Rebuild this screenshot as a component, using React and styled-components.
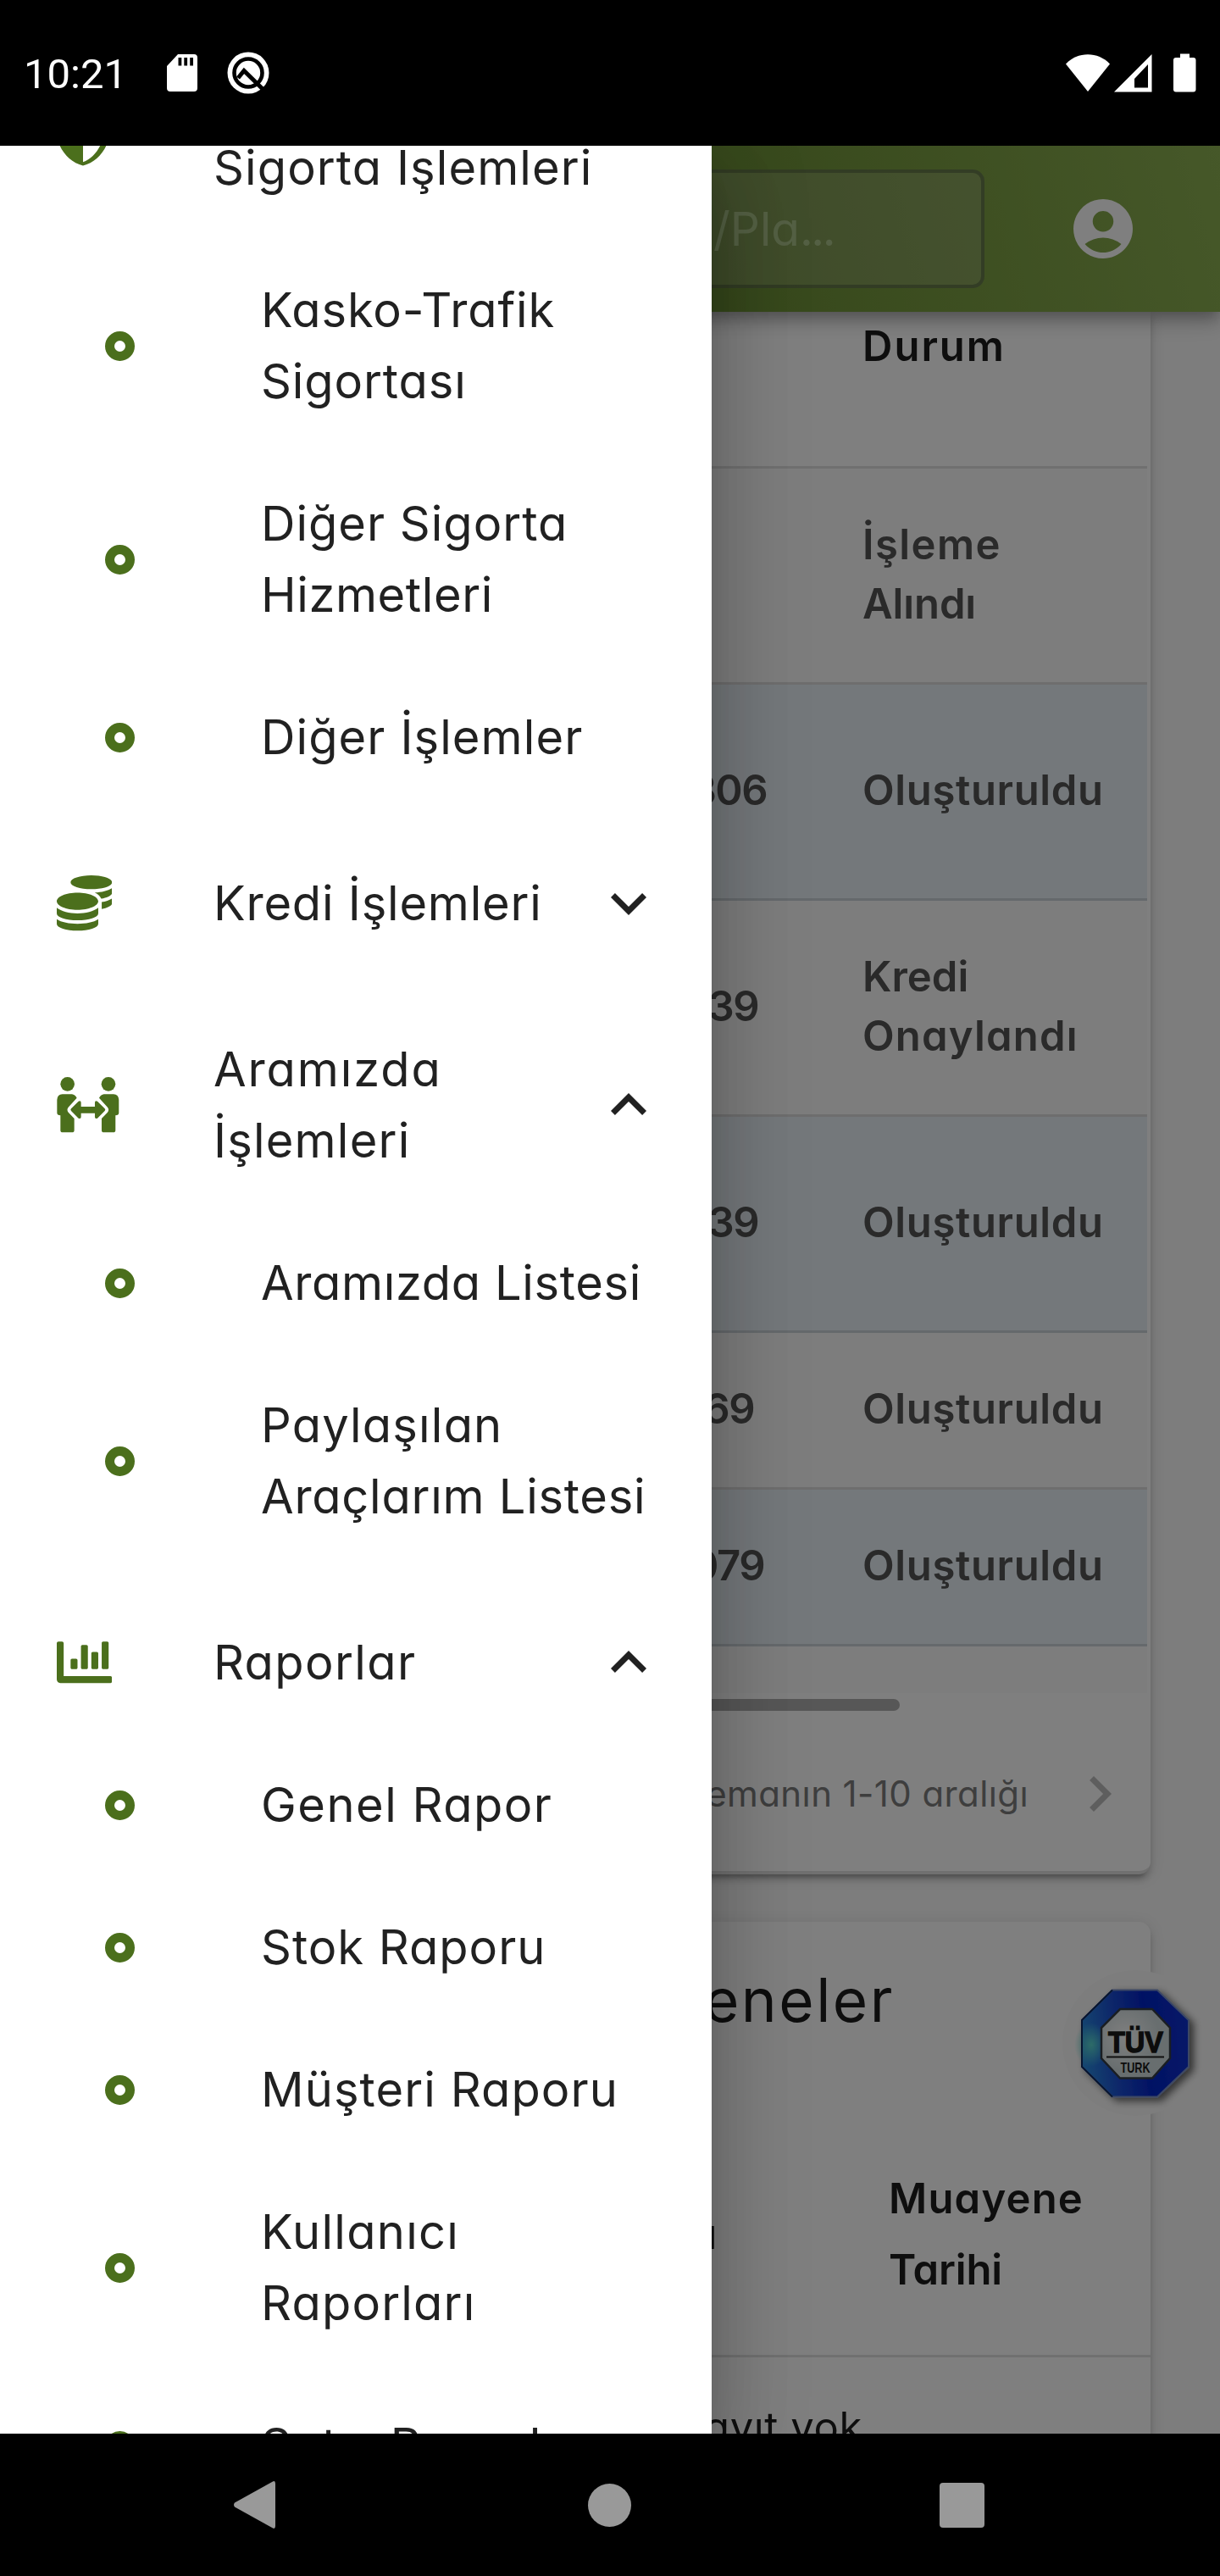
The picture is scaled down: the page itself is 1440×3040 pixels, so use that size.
import styled, { createGlobalStyle } from "styled-components";
import { FaChartBar, FaCoins } from "react-icons/fa";
import {
    MdAccountCircle,
    MdChevronRight,
    MdExpandLess,
    MdExpandMore,
} from "react-icons/md";

const ShieldHalf = () => (
    <svg viewBox="0 0 24 24" width="84" height="84" fill="currentColor">
        <path d="M12 1L3 5v6c0 5.55 3.84 10.74 9 12 5.16-1.26 9-6.45 9-12V5l-9-4m0 2.18l7 3.12v4.7c0 4.83-3.13 9.42-7 10.79V3.18z" />
    </svg>
);

const person =
    "M70 111H104Q114 112 121 124L91 157Q84 166 91 175L112 197V238Q112 246 104 246H71Q63 246 63 238V186Q51 186 51 177V131Q52 112 70 111z";

const PeopleArrows = () => (
    <svg viewBox="50 50 221 196" fill="currentColor">
        <circle cx="88" cy="75" r="25" />
        <path d={person} />
        <g transform="matrix(-1 0 0 1 321 0)">
            <circle cx="88" cy="75" r="25" />
            <path d={person} />
        </g>
        <path d="M101 162L127 136Q136 132 136 141V155H185V141Q185 132 194 136L220 162Q224 166 220 170L194 196Q185 200 185 191V178H136V191Q136 200 127 196L101 170Q97 166 101 162z" />
    </svg>
);

// every line is [text, letter spacing]
const menu = [
    {
        icon: <ShieldHalf />,
        lines: [["Sigorta İşlemleri", 1.1]],
        items: [
            [["Kasko-Trafik", 0.9], ["Sigortası", 0.9]],
            [["Diğer Sigorta", 1], ["Hizmetleri", 0.6]],
            [["Diğer İşlemler", 1.1]],
        ],
    },
    {
        icon: <FaCoins />,
        small: true,
        chevron: <MdExpandMore />,
        lines: [["Kredi İşlemleri", 0.8]],
        items: [],
    },
    {
        icon: <PeopleArrows />,
        small: true,
        chevron: <MdExpandLess />,
        lines: [["Aramızda", 1.9], ["İşlemleri", 1.2]],
        items: [
            [["Aramızda Listesi", 0.65]],
            [["Paylaşılan", 1.2], ["Araçlarım Listesi", 0.75]],
        ],
    },
    {
        icon: <FaChartBar />,
        small: true,
        chevron: <MdExpandLess />,
        lines: [["Raporlar", 1.4]],
        items: [
            [["Genel Rapor", 1.5]],
            [["Stok Raporu", 1]],
            [["Müşteri Raporu", 1.1]],
            [["Kullanıcı", 1.3], ["Raporları", 1.2]],
            [["Satış Raporları", 0.9]],
        ],
    },
];

const rows = [
    { status: [["İşleme", 1.4], ["Alındı", -0.1]] },
    { no: "306", end: 113, striped: true, status: [["Oluşturuldu", 0.65]] },
    { no: "139", end: 123, status: [["Kredi", 0], ["Onaylandı", 1.2]] },
    { no: "139", end: 123, striped: true, status: [["Oluşturuldu", 0.65]] },
    { no: "169", end: 128, short: true, status: [["Oluşturuldu", 0.65]] },
    { no: "079", end: 116, short: true, striped: true, status: [["Oluşturuldu", 0.65]] },
];

const Lines = ({ lines }) =>
    lines.map(([text, track]) => (
        <Line key={text} $track={track}>
            {text}
        </Line>
    ));

const StatusBar = () => (
    <TopBar>
        <Clock>10:21</Clock>
        <svg width="38" height="46" viewBox="0 0 38 46">
            <path
                fill="#fff"
                fillRule="evenodd"
                d="M14 1H33a4 4 0 0 1 4 4V41a4 4 0 0 1-4 4H5a4 4 0 0 1-4-4V15zM14.500 5v9.500h3.800V5zM21.300 5v9.500h3.800V5zM28.200 5v9.500h3.800V5z"
            />
        </svg>
        <AndroidQ width="52" height="52" viewBox="0 0 52 52">
            <circle cx="26" cy="26" r="24.500" fill="#fff" />
            <circle cx="26" cy="26" r="16.500" fill="#fff" stroke="#000" strokeWidth="4.600" />
            <path d="M14 32l7-8.500L44 46" fill="none" stroke="#000" strokeWidth="5" />
        </AndroidQ>
        <Signals width="156" height="46" viewBox="0 0 156 46">
            <path fill="#fff" d="M1 12.500C15-2.500 39-2.500 53 12.500L27 45z" />
            <path
                fill="#fff"
                fillRule="evenodd"
                d="M102.500 1V45.500H58zM98 13L82 30V40.500H98z"
            />
            <path
                fill="#fff"
                d="M136 .500h11V5h4.500a3 3 0 0 1 3 3V42.500a3 3 0 0 1-3 3h-20.500a3 3 0 0 1-3-3V8a3 3 0 0 1 3-3h5z"
            />
        </Signals>
    </TopBar>
);

const NavBar = () => (
    <BottomBar>
        <svg width="56" height="60" viewBox="0 0 56 60">
            <path fill="#999" d="M4 27.500L49 2.500Q52 1 52 5V55Q52 59 49 57.500L4 32.500Q2 30 4 27.500z" />
        </svg>
        <HomeKey />
        <RecentKey />
    </BottomBar>
);

const TuvBadge = () => (
    <Badge>
        <svg width="172" height="172" viewBox="0 0 172 172">
            <defs>
                <linearGradient id="ring" x1="0" x2="1" y1="0.5" y2="0.4">
                    <stop offset="0" stopColor="#2a8ce0" />
                    <stop offset="0.3" stopColor="#1c50d4" />
                    <stop offset="0.6" stopColor="#0424c8" />
                    <stop offset="1" stopColor="#0a30d0" />
                </linearGradient>
                <radialGradient id="teal">
                    <stop offset="0" stopColor="#5ad8d0" />
                    <stop offset="1" stopColor="#5ad8d0" stopOpacity="0" />
                </radialGradient>
                <radialGradient id="plate" cx="0.35" cy="0.4">
                    <stop offset="0" stopColor="#fff" />
                    <stop offset="1" stopColor="#d0dcde" />
                </radialGradient>
                <filter id="drop" x="-20%" y="-20%" width="150%" height="150%">
                    <feDropShadow dx="5" dy="4" stdDeviation="5" floodOpacity="0.6" />
                </filter>
            </defs>
            <g filter="url(#drop)">
                <path
                    d="M59 23.500H112L149 59V114L112 149.500H59L23 114V59z"
                    fill="url(#ring)"
                    stroke="#7a90c8"
                    strokeWidth="2"
                />
            </g>
            <ellipse cx="34" cy="88" rx="20" ry="26" fill="url(#teal)" />
            <path d="M59 149.500L23 114V59L59 23.500" fill="none" stroke="#0c2860" strokeWidth="2" />
            <path
                d="M68 46H106L127 68V104L106 127.500H68L46 104V68z"
                fill="url(#plate)"
                stroke="#343c44"
                strokeWidth="2.500"
            />
            <TuvText x="86.500" y="97" $size={35} $stroke={1.4} textLength="65" lengthAdjust="spacingAndGlyphs">
                TÜV
            </TuvText>
            <rect x="52" y="101.500" width="68" height="2" fill="#202020" />
            <TuvText x="86" y="120.500" $size={16.5} $stroke={0} textLength="35" lengthAdjust="spacingAndGlyphs">
                TURK
            </TuvText>
        </svg>
    </Badge>
);

const App = () => {
    return (
        <Screen>
            <GlobalStyle />
            <StatusBar />
            <Viewport>
                <AppBar>
                    <Search>
                        /Pla<Dots>...</Dots>
                    </Search>
                    <MdAccountCircle size={84} color="#fff" />
                </AppBar>
                <TableCard>
                    <HeadRow>
                        <StatusCell>
                            <Lines lines={[["Durum", 2]]} />
                        </StatusCell>
                    </HeadRow>
                    {rows.map((row, i) => (
                        <Row key={i} $short={row.short} $striped={row.striped}>
                            <NumberCell $end={row.end}>{row.no}</NumberCell>
                            <StatusCell>
                                <Lines lines={row.status} />
                            </StatusCell>
                        </Row>
                    ))}
                    <Filler />
                    <ScrollThumb />
                    <Pager>
                        <PagerText>elemanın 1-10 aralığı</PagerText>
                        <MdChevronRight size={84} color="#bcbcbc" />
                    </Pager>
                </TableCard>
                <InspectionCard>
                    <CardTitle>Muayeneler</CardTitle>
                    <InspectionHead>
                        <PlateHead>Plakası</PlateHead>
                        <DateHead>
                            <Lines lines={[["Muayene", 1.2], ["Tarihi", -0.1]]} />
                        </DateHead>
                    </InspectionHead>
                    <EmptyRow>Kayıt yok</EmptyRow>
                </InspectionCard>
                <TuvBadge />
                <Scrim />
                <Drawer>
                    {menu.map((group, i) => (
                        <Group key={i}>
                            <GroupRow>
                                <GroupIcon $small={group.small}>{group.icon}</GroupIcon>
                                <Label>
                                    <Lines lines={group.lines} />
                                </Label>
                                <Chevron>{group.chevron}</Chevron>
                            </GroupRow>
                            {group.items.map((lines) => (
                                <ItemRow key={lines[0][0]}>
                                    <Dot />
                                    <Label>
                                        <Lines lines={lines} />
                                    </Label>
                                </ItemRow>
                            ))}
                        </Group>
                    ))}
                </Drawer>
            </Viewport>
            <NavBar />
        </Screen>
    );
};

//Styled-Components
const GlobalStyle = createGlobalStyle`
    * {
        box-sizing: border-box;
    }
    body {
        margin: 0;
        background: #000;
    }
    svg {
        display: block;
        flex-shrink: 0;
    }
`;
const Screen = styled.div`
    width: 1440px;
    height: 3040px;
    display: flex;
    flex-direction: column;
    font-family: Inter, "Open Sans", sans-serif;
    font-feature-settings: "cv11";
    overflow: hidden;
`;
const TopBar = styled.header`
    height: 172px;
    flex-shrink: 0;
    display: flex;
    align-items: center;
    padding: 0 27px 0 28px;
    background: #000;
`;
const Clock = styled.span`
    width: 168px;
    font-family: Roboto, sans-serif;
    font-size: 49px;
    line-height: 58px;
    padding-top: 4px;
    color: #fff;
`;
const AndroidQ = styled.svg`
    margin-left: 33px;
`;
const Signals = styled.svg`
    margin-left: auto;
`;
const BottomBar = styled.nav`
    height: 168px;
    flex-shrink: 0;
    display: flex;
    align-items: center;
    justify-content: space-between;
    padding: 0 278px 0 273px;
    background: #000;
`;
const HomeKey = styled.div`
    width: 51px;
    height: 51px;
    border-radius: 50%;
    background: #999;
`;
const RecentKey = styled.div`
    width: 53px;
    height: 53px;
    border-radius: 4px;
    background: #999;
`;
const Viewport = styled.main`
    position: relative;
    height: 2700px;
    flex-shrink: 0;
    overflow: hidden;
    background: #fafafa;
`;
const AppBar = styled.div`
    position: relative;
    height: 196px;
    display: flex;
    align-items: center;
    justify-content: flex-end;
    gap: 98px;
    padding-right: 96px;
    background: linear-gradient(75deg, #5c802c 40%, #76993e 70%, #8cb052);
    box-shadow: 0 7px 14px -3px rgba(0, 0, 0, 0.2),
        0 14px 18px rgba(0, 0, 0, 0.14), 0 3px 35px rgba(0, 0, 0, 0.12);
`;
const Search = styled.div`
    width: 560px;
    height: 140px;
    border: 4px solid rgba(80, 96, 62, 0.6);
    border-radius: 14px;
    padding-right: 174px;
    background: rgba(165, 170, 150, 0.3);
    font-size: 55px;
    line-height: 132px;
    text-align: right;
    color: #a9c088;
`;
const Dots = styled.span`
    letter-spacing: -2.5px;
`;
const Line = styled.div`
    letter-spacing: ${(props) => props.$track}px;
    white-space: nowrap;
`;
const Card = styled.section`
    width: 1276px;
    margin-left: 82px;
    background: #fff;
    box-shadow: 0 10px 4px -7px rgba(0, 0, 0, 0.2),
        0 7px 7px rgba(0, 0, 0, 0.14), 0 3px 18px rgba(0, 0, 0, 0.12);
`;
const TableCard = styled(Card)`
    height: 1844px;
    border: solid rgba(0, 0, 0, 0.12);
    border-width: 0 0 4px;
    border-radius: 0 0 14px 14px;
    padding-right: 4px;
`;
const Row = styled.div`
    display: flex;
    align-items: center;
    height: ${(props) => (props.$short ? 185 : 255)}px;
    padding-bottom: 3px;
    border-bottom: 3px solid rgba(0, 0, 0, 0.12);
    background: ${(props) => (props.$striped ? "#e8f0f6" : "#fbfbfb")};
    font-size: 49px;
    font-weight: 600;
    line-height: 70px;
    color: #545454;
`;
const HeadRow = styled(Row)`
    height: 185px;
    align-items: flex-end;
    justify-content: flex-end;
    padding-bottom: 99px;
    background: #fff;
    line-height: 84px;
    color: #1c1c1c;
`;
const NumberCell = styled.div`
    flex: 1;
    padding-right: ${(props) => props.$end}px;
    letter-spacing: -1.5px;
    text-align: right;
`;
const StatusCell = styled.div`
    width: 336px;
`;
const Filler = styled.div`
    height: 55px;
    background: #fbfbfb;
`;
const ScrollThumb = styled.div`
    width: 980px;
    height: 14px;
    margin-top: 7px;
    border-radius: 7px;
    background: #aeaeae;
`;
const Pager = styled.div`
    height: 189px;
    display: flex;
    align-items: center;
    justify-content: flex-end;
    gap: 42px;
    padding: 6px 14px 0 0;
`;
const PagerText = styled.span`
    font-size: 42px;
    letter-spacing: 0.4px;
    color: #7c7c7c;
`;
const InspectionCard = styled(Card)`
    height: 760px;
    margin-top: 56px;
    border-radius: 14px;
    padding-top: 36px;
`;
const CardTitle = styled.h2`
    margin: 0;
    padding-right: 302px;
    font-size: 71px;
    font-weight: 400;
    line-height: 112px;
    letter-spacing: 2.5px;
    text-align: right;
    color: #1c1c1c;
`;
const InspectionHead = styled.div`
    height: 366px;
    display: flex;
    align-items: flex-end;
    padding-bottom: 58px;
    border-bottom: 3px solid rgba(0, 0, 0, 0.12);
    font-size: 49px;
    font-weight: 600;
    line-height: 84px;
    color: #1c1c1c;
`;
const PlateHead = styled.div`
    flex: 1;
    padding: 0 203px 42px 0;
    text-align: right;
`;
const DateHead = styled.div`
    width: 309px;
`;
const EmptyRow = styled.div`
    padding-right: 340px;
    font-size: 49px;
    line-height: 166px;
    letter-spacing: 0.6px;
    text-align: right;
    color: #1c1c1c;
`;
const Badge = styled.div`
    position: absolute;
    top: 2153px;
    left: 1254px;
    border-radius: 50%;
    overflow: hidden;
    background: #fbfbfb;
`;
const TuvText = styled.text`
    font-family: "Liberation Sans", sans-serif;
    font-size: ${(props) => props.$size}px;
    font-weight: 700;
    text-anchor: middle;
    fill: #181818;
    stroke: #181818;
    stroke-width: ${(props) => props.$stroke};
`;
const Scrim = styled.div`
    position: absolute;
    inset: 0;
    background: rgba(0, 0, 0, 0.5);
`;
const Drawer = styled.aside`
    position: absolute;
    top: 0;
    left: 0;
    width: 840px;
    height: 100%;
    background: #fff;
    box-shadow: 0 28px 35px -17px rgba(0, 0, 0, 0.2),
        0 56px 84px 7px rgba(0, 0, 0, 0.14), 0 21px 105px 18px rgba(0, 0, 0, 0.12);
    font-size: 56px;
    line-height: 84px;
    color: #212121;
`;
const Group = styled.div`
    padding-top: 28px;
    /* the list is scrolled, its first label has one line above the fold */
    &:first-child {
        margin-top: -86px;
    }
`;
const GroupRow = styled.div`
    display: flex;
    align-items: center;
    padding: 42px 56px;
    ${Group}:first-child & {
        align-items: flex-start;
    }
`;
const GroupIcon = styled.div`
    width: 196px;
    padding-left: ${(props) => (props.$small ? 11 : 0)}px;
    color: #4b6f1c;
    svg {
        height: ${(props) => (props.$small ? 65.3 : 84)}px;
        width: auto;
    }
    ${Group}:first-child & {
        height: 84px;
        margin-top: -41px;
    }
`;
const Label = styled.div`
    flex: 1;
`;
const Chevron = styled.div`
    font-size: 84px;
`;
const ItemRow = styled.div`
    display: flex;
    align-items: center;
    padding: 42px 0 42px 124px;
`;
const Dot = styled.div`
    width: 35px;
    height: 35px;
    margin-right: 149px;
    border: 11.5px solid #4b6f1c;
    border-radius: 50%;
`;

export default App;
